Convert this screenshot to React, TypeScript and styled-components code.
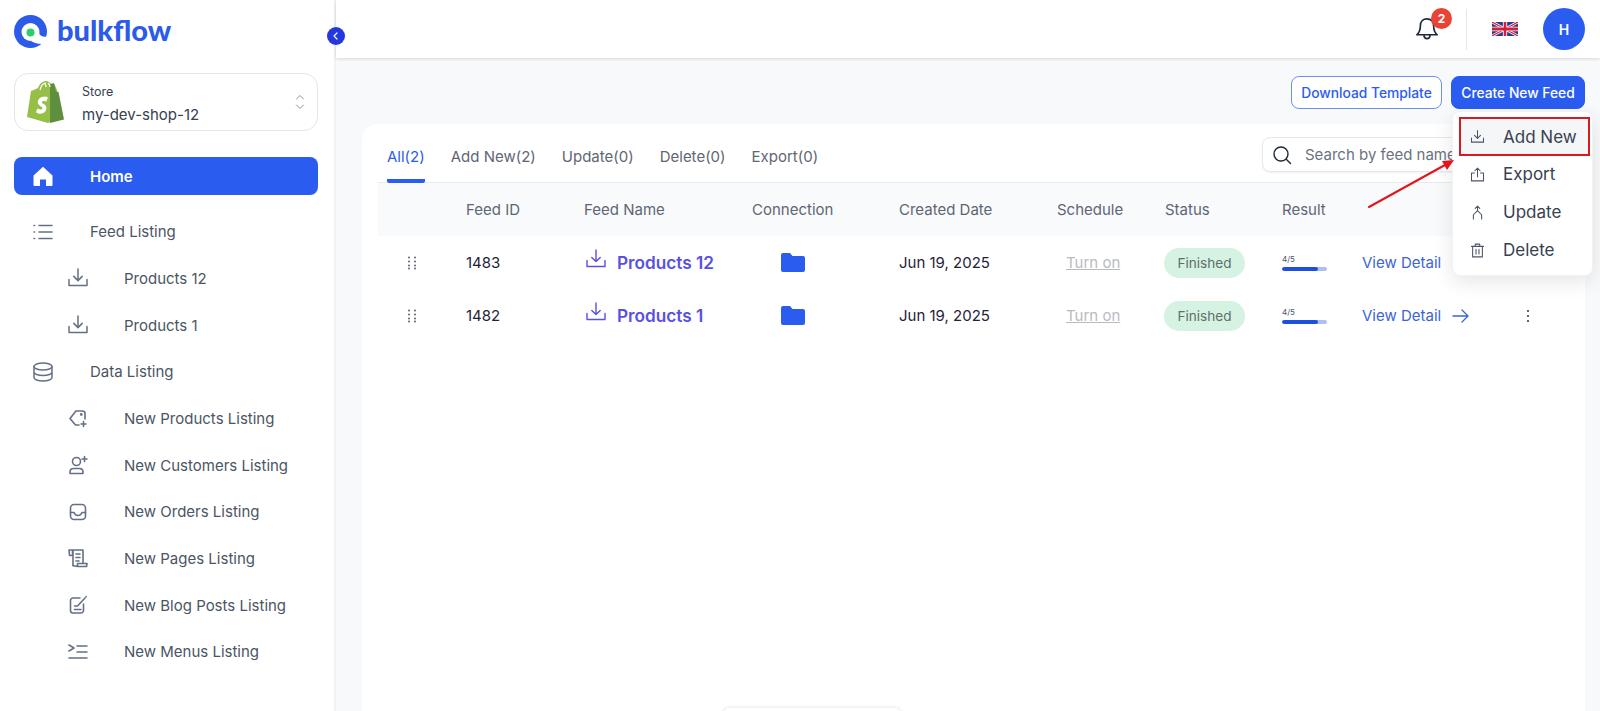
import React from "react";
import styled, { createGlobalStyle } from "styled-components";

const Global = createGlobalStyle`
  html, body { margin: 0; padding: 0; height: 711px; overflow: hidden; background: #f8f9fa; }
  body { font-family: Inter, "Liberation Sans", sans-serif; }
  #root { height: 711px; }
  * { box-sizing: border-box; }
`;

const Page = styled.div`
  display: flex;
  width: 1600px;
  height: 711px;
  position: relative;
  overflow: hidden;
  background: #f8f9fa;
`;

const Sidebar = styled.aside`
  width: 336px;
  flex: none;
  background: #fff;
  border-right: 2px solid #f1f2f4;
  padding: 15px 16px 0 14px;
  display: flex;
  flex-direction: column;
`;

const Brand = styled.div`
  display: flex;
  align-items: center;
  gap: 9px;
  height: 33px;
`;

const BrandName = styled.span`
  font-family: Lato, "Open Sans", sans-serif;
  font-weight: 900;
  font-size: 29px;
  line-height: 33px;
  margin-top: -4px;
  color: #2b5be8;
`;

const StoreCard = styled.div`
  margin-top: 25px;
  height: 58px;
  width: 304px;
  border: 1px solid #e3e5e8;
  border-radius: 14px;
  display: flex;
  align-items: center;
  padding: 0 12px 0 11px;
`;

const StoreText = styled.div`
  margin-left: 18px;
  flex: 1;
  display: flex;
  flex-direction: column;
  gap: 7px;
  padding-top: 3px;
`;

const StoreLabel = styled.span`
  font-size: 12.5px;
  line-height: 15px;
  color: #374151;
`;

const StoreName = styled.span`
  font-size: 15px;
  line-height: 18px;
  color: #374151;
`;

const Nav = styled.nav`
  margin-top: 26px;
  width: 304px;
  display: flex;
  flex-direction: column;
`;

const HomeItem = styled.a`
  height: 38px;
  margin-bottom: 13.5px;
  border-radius: 8px;
  background: #2b5cf0;
  color: #fff;
  display: flex;
  align-items: center;
  padding-left: 19px;
  gap: 37px;
  font-size: 15px;
  font-weight: 600;
`;

const NavItem = styled.a<{ $sub?: boolean }>`
  height: 46.67px;
  flex: none;
  display: flex;
  align-items: center;
  gap: ${(p) => (p.$sub ? "36px" : "37px")};
  padding-left: ${(p) => (p.$sub ? "54px" : "19px")};
  font-size: 15px;
  color: #4b5563;
`;

const IconSlot = styled.span`
  width: 20px;
  height: 20px;
  flex: none;
  display: inline-flex;
  align-items: center;
  justify-content: center;
  color: #667085;
`;

const Collapse = styled.button`
  position: absolute;
  left: 327px;
  top: 27px;
  width: 18px;
  height: 18px;
  padding: 0;
  border: none;
  border-radius: 50%;
  background: #2438e0;
  display: flex;
  align-items: center;
  justify-content: center;
  z-index: 5;
`;

const Main = styled.main`
  flex: 1;
  min-width: 0;
  display: flex;
  flex-direction: column;
`;

const Header = styled.header`
  height: 58px;
  flex: none;
  background: #fff;
  box-shadow: 0 1px 3px rgba(0, 0, 0, 0.14);
  display: flex;
  align-items: center;
  justify-content: flex-end;
  padding-right: 15px;
`;

const Bell = styled.div`
  position: relative;
  width: 24px;
  height: 24px;
  margin-right: 27px;
  color: #1f2937;
`;

const Badge = styled.span`
  position: absolute;
  left: 16px;
  top: -9px;
  width: 21px;
  height: 21px;
  border-radius: 50%;
  background: #ea4335;
  color: #fff;
  font-size: 12px;
  font-weight: 700;
  display: flex;
  align-items: center;
  justify-content: center;
`;

const HeaderDivider = styled.div`
  width: 1px;
  height: 41px;
  background: #e7e8ea;
  margin-right: 25px;
`;

const Flag = styled.svg`
  width: 26px;
  height: 14px;
  margin-right: 25px;
  flex: none;
`;

const Avatar = styled.div`
  width: 42px;
  height: 42px;
  border-radius: 50%;
  background: #2b5cf0;
  color: #fff;
  font-weight: 600;
  font-size: 14px;
  display: flex;
  align-items: center;
  justify-content: center;
`;

const Content = styled.div`
  flex: 1;
  min-height: 0;
  padding: 18px 15px 0 26px;
  display: flex;
  flex-direction: column;
`;

const Actions = styled.div`
  display: flex;
  justify-content: flex-end;
  gap: 9px;
  height: 33px;
  flex: none;
`;

const ActionButton = styled.button<{ $primary?: boolean }>`
  height: 33px;
  border-radius: 8px;
  font-family: inherit;
  font-size: 13.8px;
  font-weight: 500;
  padding: 0;
  color: ${(p) => (p.$primary ? "#fff" : "#2b5cf0")};
  background: ${(p) => (p.$primary ? "#2b5cf0" : "#fff")};
  border: 1px solid ${(p) => (p.$primary ? "#2b5cf0" : "#6d8ff2")};
  width: ${(p) => (p.$primary ? "134px" : "151px")};
`;

const Card = styled.section`
  margin-top: 15px;
  flex: 1;
  background: #fff;
  border-radius: 16px 16px 0 0;
  padding: 13px 0 0 16px;
  display: flex;
  flex-direction: column;
`;

const TabBar = styled.div`
  height: 46px;
  flex: none;
  border-bottom: 1px solid #e8eaed;
  display: flex;
  align-items: flex-start;
  position: relative;
  padding-left: 9px;
  gap: 26px;
`;

const Tab = styled.div<{ $active?: boolean }>`
  height: 46px;
  padding-top: 10px;
  font-size: 15px;
  line-height: 19px;
  color: ${(p) => (p.$active ? "#2b5cf0" : "#5f6673")};
  border-bottom: 4px solid ${(p) => (p.$active ? "#2b5cf0" : "transparent")};
  border-radius: 0 0 2px 2px;
`;

const Search = styled.div`
  position: absolute;
  left: 884px;
  top: 0;
  width: 300px;
  height: 35px;
  background: #fff;
  border: 1px solid #e6e8eb;
  border-radius: 8px;
  box-shadow: 0 1px 2px rgba(0, 0, 0, 0.06);
  display: flex;
  align-items: center;
  padding-left: 9px;
  gap: 13px;
  font-size: 15px;
  color: #6b7280;
  white-space: nowrap;
`;

const cols = "88px 118px 168px 147px 158px 108px 117px 80px 166px 57px";

const HeadRow = styled.div`
  display: grid;
  grid-template-columns: ${cols};
  height: 53px;
  align-items: center;
  background: #f8fafc;
  font-size: 15px;
  color: #5f6673;
`;

const Row = styled.div`
  display: grid;
  grid-template-columns: ${cols};
  height: 53px;
  align-items: center;
  font-size: 15px;
  color: #1f2337;
`;

const Handle = styled.span`
  justify-self: start;
  margin-left: 29px;
  display: inline-flex;
  color: #4b5563;
`;

const FeedName = styled.span`
  display: flex;
  align-items: center;
  gap: 11px;
  padding-left: 2px;
  font-size: 17.2px;
  font-weight: 600;
  color: #5850e4;

  svg {
    margin-top: -7px;
  }
`;

const FolderCell = styled.span`
  padding-left: 29px;
  display: flex;
`;

const TurnOn = styled.span`
  padding-left: 9px;
  color: #b9bbc0;
  text-decoration: underline;
`;

const Pill = styled.span`
  display: inline-flex;
  align-items: center;
  justify-content: center;
  width: 81px;
  height: 30px;
  margin-left: -1px;
  border-radius: 15px;
  background: #d5f2e3;
  color: #5e6f69;
  font-size: 13.6px;
`;

const ResultCell = styled.div`
  display: flex;
  flex-direction: column;
  width: 45px;
  gap: 3px;
`;

const ResultLabel = styled.span`
  font-size: 8px;
  line-height: 10px;
  color: #4b5563;
`;

const Bar = styled.div`
  height: 4px;
  border-radius: 2px;
  background: #aebff5;
  overflow: hidden;
`;

const BarFill = styled.div`
  height: 100%;
  background: #1d50e0;
  border-radius: 2px;
`;

const DetailLink = styled.a`
  display: flex;
  align-items: center;
  gap: 11px;
  color: #3b64d8;
`;

const More = styled.span`
  justify-self: start;
  display: inline-flex;
  color: #374151;
  margin-left: -2px;
`;

const Menu = styled.div`
  position: absolute;
  left: 1452px;
  top: 111px;
  width: 141px;
  height: 165px;
  background: #fff;
  border-radius: 8px;
  border: 1px solid #f1f2f4;
  box-shadow: 0 6px 20px rgba(0, 0, 0, 0.1);
  padding: 5px 0 0 0;
  z-index: 6;
  display: flex;
  flex-direction: column;
`;

const MenuItem = styled.div<{ $active?: boolean }>`
  height: ${(p) => (p.$active ? "37px" : "38px")};
  flex: none;
  margin: ${(p) => (p.$active ? "1px" : "0")} 3px 0 7px;
  padding-left: 10px;
  display: flex;
  align-items: center;
  gap: 18px;
  font-size: 17px;
  color: #374151;
  background: ${(p) => (p.$active ? "#f5f6f7" : "transparent")};
  outline: ${(p) => (p.$active ? "2px solid #d81920" : "none")};
  outline-offset: -1px;
`;

const MenuIcon = styled.span`
  width: 15px;
  height: 16px;
  display: inline-flex;
  align-items: center;
  justify-content: center;
  color: #4b5563;
  flex: none;
`;

const Annotation = styled.svg`
  position: absolute;
  left: 1360px;
  top: 150px;
  width: 100px;
  height: 65px;
  z-index: 7;
  pointer-events: none;
`;

const BottomBar = styled.div`
  position: absolute;
  left: 722px;
  top: 708px;
  width: 180px;
  height: 30px;
  border-radius: 8px;
  background: #fff;
  box-shadow: 0 0 4px rgba(0, 0, 0, 0.14);
`;

type IP = { size?: number; sw?: number; children: React.ReactNode };
const Ico = ({ size = 20, sw = 1.5, children }: IP) => (
  <svg width={size} height={size} viewBox="0 0 20 20" fill="none" stroke="currentColor" strokeWidth={sw} strokeLinecap="round" strokeLinejoin="round">
    {children}
  </svg>
);

const DownloadTray = ({ size = 20, sw = 1.5 }: { size?: number; sw?: number }) => (
  <Ico size={size} sw={sw}>
    <path d="M10 1v11.5M5.8 8.400 10 12.600l4.200-4.200" />
    <path d="M1 11.500v6h18v-6" />
  </Ico>
);

const Logo = () => (
  <svg width="34" height="34" viewBox="0 0 34 34">
    <circle cx="16.5" cy="16.5" r="16.5" fill="#2b5be8" />
    <path d="M25 18C26 21 29 22.500 34 21.500V34H27.500V29C24 29 20 28 17 26Z" fill="#fff" />
    <circle cx="16.500" cy="17" r="9" fill="#fff" />
    <circle cx="16.500" cy="17.500" r="4" fill="#2ecc71" />
  </svg>
);

const ShopifyBag = () => (
  <svg width="38" height="42" viewBox="0 0 38 42">
    <path d="M1 36 5 10c3-1 5-2 7-3 2-5 5-7 8-7 2 0 4 1 5 3l3-1 3 7 6 26-15 7z" fill="#95bf47" />
    <path d="M28 2.500 24 3 24 42l14-3.500L32.500 11l-2.500-.5z" fill="#5e8e3e" />
    <path d="M14 9c1-4 3-7 6-7M20 6c0-2-.5-3-1.500-4M24 6c0-2-1-3-2-4" fill="none" stroke="#fff" strokeWidth="1.200" />
    <path d="M22 16.500c-1-.6-2.200-.9-3.500-.9-4 0-6.700 2.800-6.700 5.800 0 3.500 4.700 3.800 4.700 5.600 0 1-1 1.600-2 1.600-1.500 0-3.200-1-3.200-1L10 31.300c1 .9 2.700 1.500 4.400 1.500 3.500 0 6-2.400 6-5.700 0-4-4.600-4.300-4.600-5.800 0-.6.500-1.400 2-1.400 1 0 2.500.6 2.500.6z" fill="#fff" />
  </svg>
);

const HomeIcon = () => (
  <svg width="20" height="20" viewBox="0 0 20 20" fill="#fff">
    <path d="M10 .8 19.500 9.400V19a1 1 0 0 1-1 1H13v-6.500H7V20H1.500a1 1 0 0 1-1-1V9.400z" />
  </svg>
);

const UkFlag = () => (
  <Flag viewBox="0 0 60 30" preserveAspectRatio="none">
    <rect width="60" height="30" fill="#2a3a8c" />
    <path d="M0 0 60 30M60 0 0 30" stroke="#fff" strokeWidth="6" />
    <path d="M0 0 60 30M60 0 0 30" stroke="#d0213a" strokeWidth="2.500" />
    <path d="M30 0v30M0 15h60" stroke="#fff" strokeWidth="10" />
    <path d="M30 0v30M0 15h60" stroke="#d0213a" strokeWidth="6" />
  </Flag>
);

const feedItems = ["Products 12", "Products 1"];

const dataItems: [string, React.ReactNode][] = [
  ["New Products Listing", <Ico sw={1.6}><path d="M8 3h6.500a2.500 2.500 0 0 1 2.500 2.500V11M11 17H7.500L2 10.500 8 3" /><circle cx="13.300" cy="6.500" r=".6" /><path d="M15.500 13.500v5M13 16h5" /></Ico>],
  ["New Customers Listing", <Ico sw={1.6}><circle cx="8.500" cy="6.500" r="4" /><path d="M2 18.500v-1.500c0-2 1.500-3.500 3.500-3.500h6c2 0 3.500 1.500 3.500 3.500v1.500zM16.500 1.500v5M14 4h5" /></Ico>],
  ["New Orders Listing", <Ico sw={1.6}><rect x="2.500" y="2.500" width="15" height="15" rx="3.500" /><path d="M2.500 10.500h3.500c.8 2 2.200 3 4 3s3.200-1 4-3h3.500" /></Ico>],
  ["New Pages Listing", <Ico sw={1.6}><path d="M1 2h3.500v5.500H1.500zM4.500 2H15v13M5 2v15.500M8 6h4M8 9.500h4M8 13h3" /><path d="M5 17.500c3 1.500 10 1 13.500 1l.5-3H9.500v3" /></Ico>],
  ["New Blog Posts Listing", <Ico sw={1.6}><path d="M12 3H5a2.500 2.500 0 0 0-2.500 2.500v10A2.500 2.500 0 0 0 5 18h8a2.500 2.500 0 0 0 2.500-2.500V9" /><path d="M10 10.500 17 3M6.500 11h3M6.500 14.500h6.500" /><path d="M18 1.500v.5" /></Ico>],
  ["New Menus Listing", <Ico sw={1.6}><path d="m1 3 5 3-5 3M9 4h10M9 10h10M1 16h18" /></Ico>],
];

const rows = [
  { id: "1483", name: "Products 12" },
  { id: "1482", name: "Products 1" },
];

const DragDots = () => (
  <svg width="10" height="14" viewBox="0 0 10 14" fill="currentColor">
    {[1.5, 5.5, 9.5, 12.5].map((y) => (
      <React.Fragment key={y}>
        <circle cx="2" cy={y} r=".9" />
        <circle cx="8" cy={y} r=".9" />
      </React.Fragment>
    ))}
  </svg>
);

export default function App() {
  return (
    <Page>
      <Global />
      <Sidebar>
        <Brand>
          <Logo />
          <BrandName>bulkflow</BrandName>
        </Brand>
        <StoreCard>
          <ShopifyBag />
          <StoreText>
            <StoreLabel>Store</StoreLabel>
            <StoreName>my-dev-shop-12</StoreName>
          </StoreText>
          <svg width="10" height="16" viewBox="0 0 10 16" fill="none" stroke="#8a9099" strokeWidth="1" strokeLinecap="round" strokeLinejoin="round">
            <path d="m1.500 5 3.500-3.500L8.500 5M1.500 11 5 14.500 8.500 11" />
          </svg>
        </StoreCard>
        <Nav>
          <HomeItem>
            <HomeIcon />
            Home
          </HomeItem>
          <NavItem>
            <IconSlot>
              <Ico sw={1.5}>
                <path d="M6 3.500h13M6 10h13M6 16.500h13M1 3.500h.6M1 10h.6M1 16.500h.6" />
              </Ico>
            </IconSlot>
            Feed Listing
          </NavItem>
          {feedItems.map((s) => (
            <NavItem $sub key={s}>
              <IconSlot><DownloadTray /></IconSlot>
              {s}
            </NavItem>
          ))}
          <NavItem>
            <IconSlot>
              <Ico sw={1.5}>
                <ellipse cx="10" cy="4.500" rx="9" ry="3.500" />
                <path d="M1 4.500v11c0 2 4 3.500 9 3.500s9-1.500 9-3.500v-11M1 10c0 2 4 3.500 9 3.500s9-1.500 9-3.500" />
              </Ico>
            </IconSlot>
            Data Listing
          </NavItem>
          {dataItems.map(([label, icon]) => (
            <NavItem $sub key={label}>
              <IconSlot>{icon}</IconSlot>
              {label}
            </NavItem>
          ))}
        </Nav>
      </Sidebar>
      <Collapse aria-label="Collapse">
        <svg width="8" height="8" viewBox="0 0 8 8" fill="none" stroke="#fff" strokeWidth="1.200" strokeLinecap="round" strokeLinejoin="round">
          <path d="M5 1 2 4l3 3" />
        </svg>
      </Collapse>
      <Main>
        <Header>
          <Bell>
            <Ico size={24} sw={1.4}>
              <path d="M10 1.500c-3.500 0-5.500 2.500-5.500 5.500 0 4-1 6-3 7.800h17c-2-1.800-3-3.800-3-7.800 0-3-2-5.500-5.500-5.500z" />
              <path d="M7.500 15c0 4 5 4 5 0" />
            </Ico>
            <Badge>2</Badge>
          </Bell>
          <HeaderDivider />
          <UkFlag />
          <Avatar>H</Avatar>
        </Header>
        <Content>
          <Actions>
            <ActionButton>Download Template</ActionButton>
            <ActionButton $primary>Create New Feed</ActionButton>
          </Actions>
          <Card>
            <TabBar>
              <Tab $active>All(2)</Tab>
              <Tab>Add New(2)</Tab>
              <Tab>Update(0)</Tab>
              <Tab>Delete(0)</Tab>
              <Tab>Export(0)</Tab>
              <Search>
                <svg width="20" height="20" viewBox="0 0 20 20" fill="none" stroke="#1f2937" strokeWidth="1.400" strokeLinecap="round">
                  <circle cx="9" cy="9" r="7" />
                  <path d="m14.500 14.500 4 4" />
                </svg>
                Search by feed name
              </Search>
            </TabBar>
            <HeadRow>
              <span />
              <span>Feed ID</span>
              <span>Feed Name</span>
              <span>Connection</span>
              <span>Created Date</span>
              <span>Schedule</span>
              <span>Status</span>
              <span>Result</span>
            </HeadRow>
            {rows.map((r) => (
              <Row key={r.id}>
                <Handle><DragDots /></Handle>
                <span>{r.id}</span>
                <FeedName>
                  <DownloadTray size={20} sw={1.4} />
                  {r.name}
                </FeedName>
                <FolderCell>
                  <svg width="24" height="19" viewBox="0 0 24 19" fill="#2b5cf0">
                    <path d="M0 2a2 2 0 0 1 2-2h7l2.500 3H22a2 2 0 0 1 2 2v12a2 2 0 0 1-2 2H2a2 2 0 0 1-2-2z" />
                  </svg>
                </FolderCell>
                <span>Jun 19, 2025</span>
                <TurnOn>Turn on</TurnOn>
                <span><Pill>Finished</Pill></span>
                <ResultCell>
                  <ResultLabel>4/5</ResultLabel>
                  <Bar><BarFill style={{ width: `${(4 / 5) * 100}%` }} /></Bar>
                </ResultCell>
                <DetailLink>
                  View Detail
                  <svg width="17" height="14" viewBox="0 0 17 14" fill="none" stroke="#3b64d8" strokeWidth="1.300" strokeLinecap="round" strokeLinejoin="round">
                    <path d="M1 7h15M10 1l6 6-6 6" />
                  </svg>
                </DetailLink>
                <More>
                  <svg width="4" height="14" viewBox="0 0 4 14" fill="currentColor">
                    <circle cx="2" cy="2" r="1.100" />
                    <circle cx="2" cy="7" r="1.100" />
                    <circle cx="2" cy="12" r="1.100" />
                  </svg>
                </More>
              </Row>
            ))}
          </Card>
        </Content>
      </Main>
      <Menu>
        <MenuItem $active>
          <MenuIcon>
            <Ico size={15} sw={1.4}>
              <path d="M10 2v10.500M6 8.500l4 4 4-4M2 12v5.500h16V12" />
            </Ico>
          </MenuIcon>
          Add New
        </MenuItem>
        <MenuItem>
          <MenuIcon>
            <Ico size={15} sw={1.4}>
              <path d="M10 13V1.500M6.500 5 10 1.500 13.500 5M6 8H2v10.500h16V8h-4" />
            </Ico>
          </MenuIcon>
          Export
        </MenuItem>
        <MenuItem>
          <MenuIcon>
            <Ico size={15} sw={1.4}>
              <path d="M7 4.500 10 1.500l3 3M10 1.500v6L4.500 13v5.500M10 7.500l5.500 5.500v5.500" />
            </Ico>
          </MenuIcon>
          Update
        </MenuItem>
        <MenuItem>
          <MenuIcon>
            <Ico size={15} sw={1.4}>
              <path d="M2 4.500h16M7 4.500V1.500h6v3M3.500 4.500v14h13v-14M8 8.500v6M12 8.500v6" />
            </Ico>
          </MenuIcon>
          Delete
        </MenuItem>
      </Menu>
      <Annotation viewBox="0 0 100 65">
        <path d="M9 57 85 15" stroke="#e3151c" strokeWidth="2" strokeLinecap="round" />
        <path d="M94 10 82 11 87 20z" fill="#e3151c" />
      </Annotation>
      <BottomBar />
    </Page>
  );
}
